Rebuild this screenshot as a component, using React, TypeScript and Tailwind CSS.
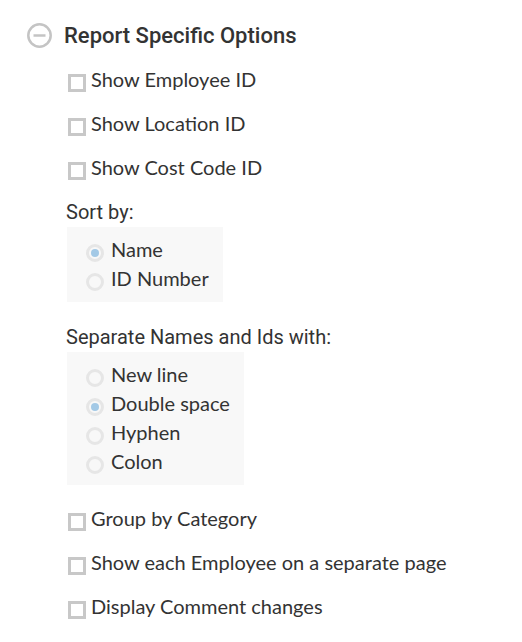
import { useState } from "react";

function Check({ label }: { label: string }) {
  return (
    <label className="flex h-11 items-start">
      <input
        type="checkbox"
        className="mt-[6px] mr-[5px] ml-[2px] size-[18px] shrink-0 appearance-none border-3 border-[#c8c8c8] bg-white checked:bg-[#9fc5e3]"
      />
      <span className="font-['Lato',sans-serif] text-[20px] leading-[22px]">{label}</span>
    </label>
  );
}

function RadioBox({ title, name, options, initial }: { title: string; name: string; options: string[]; initial: string }) {
  const [value, setValue] = useState(initial);
  return (
    <fieldset>
      <legend className="font-['Roboto',sans-serif] text-[20px] leading-6">{title}</legend>
      <div className="mt-[3px] ml-px w-fit bg-[#f8f8f8] pt-2 pr-[14px] pb-[9px] pl-[19px]">
        {options.map((o) => (
          <label key={o} className="flex h-[29px] items-start">
            <input
              type="radio"
              name={name}
              checked={value === o}
              onChange={() => setValue(o)}
              className="mt-[9px] mr-[7px] grid size-[18px] shrink-0 appearance-none place-items-center rounded-full border-3 border-[#e6e6e6] before:size-2 before:rounded-full checked:before:bg-[#a3c9e6]"
            />
            <span className="font-['Lato',sans-serif] text-[20px] leading-7">{o}</span>
          </label>
        ))}
      </div>
    </fieldset>
  );
}

export default function App() {
  return (
    <main className="min-h-screen bg-white px-[27px] pt-[22px] text-[#333]">
      <button type="button" className="flex items-center gap-[11px]">
        <svg width="26" height="26" viewBox="0 0 26 26" fill="none" stroke="#c4c4c4" strokeWidth="2.5" aria-hidden="true">
          <circle cx="12.5" cy="12.5" r="11.2" />
          <path d="M6.5 12.5h12" />
        </svg>
        <span className="font-['Roboto',sans-serif] text-[22px] leading-7 font-medium">Report Specific Options</span>
      </button>
      <div className="pt-[18px] pl-[39px]">
        <Check label="Show Employee ID" />
        <Check label="Show Location ID" />
        <Check label="Show Cost Code ID" />
        <RadioBox title="Sort by:" name="sort" options={["Name", "ID Number"]} initial="Name" />
        <div className="pt-[23px] pb-[22px]">
          <RadioBox
            title="Separate Names and Ids with:"
            name="separator"
            options={["New line", "Double space", "Hyphen", "Colon"]}
            initial="Double space"
          />
        </div>
        <Check label="Group by Category" />
        <Check label="Show each Employee on a separate page" />
        <Check label="Display Comment changes" />
      </div>
    </main>
  );
}
